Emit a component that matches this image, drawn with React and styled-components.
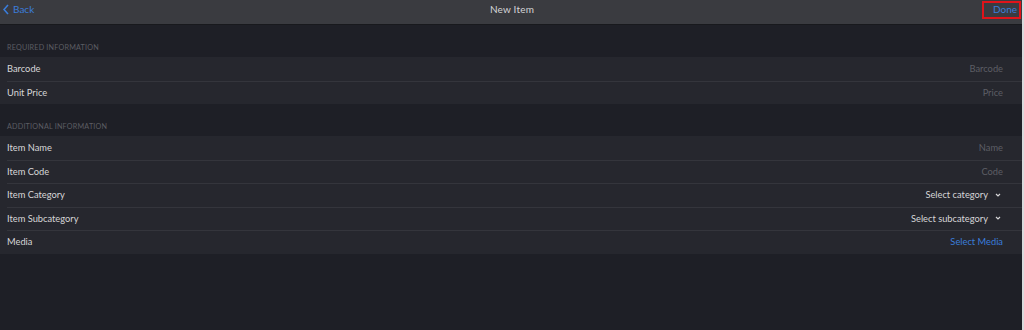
import React from 'react'
import styled, { createGlobalStyle } from 'styled-components'

const GlobalStyle = createGlobalStyle`
  html, body { margin: 0; padding: 0; background: #1e1f26; }
  body { font-family: Lato, 'Open Sans', sans-serif; }
`

const Screen = styled.div`
  width: 1022px;
  height: 330px;
  background: #1e1f26;
  border-right: 2px solid #d9dadc;
  display: flex;
  flex-direction: column;
`

const NavBar = styled.div`
  height: 25px;
  background: #3a3b40;
  border-bottom: 1px solid #18191d;
  display: grid;
  grid-template-columns: 1fr auto 1fr;
  align-items: start;
  box-sizing: border-box;
  padding: 1px 1px 0 3px;
`

const BackButton = styled.div`
  display: flex;
  align-items: center;
  gap: 4px;
  color: #3a7ddb;
  font-size: 10px;
  margin-top: 2px;
`

const Title = styled.div`
  color: #d4d4d6;
  font-size: 10px;
  letter-spacing: 0.2px;
  margin-top: 2px;
`

const DoneButton = styled.div`
  justify-self: end;
  color: #3a7ddb;
  font-size: 10px;
  border: 2px solid #e0141a;
  padding: 0 2px 0 9px;
  height: 18px;
  line-height: 13px;
  box-sizing: border-box;
`

const SectionTitle = styled.div`
  height: 32px;
  box-sizing: border-box;
  padding: 18px 0 0 7px;
  color: #5c5d63;
  font-size: 7.2px;
  text-transform: uppercase;
  letter-spacing: 0.2px;
`

const Group = styled.div`
  background: #26272e;
`

const Row = styled.div`
  height: 23.5px;
  display: flex;
  align-items: center;
  justify-content: space-between;
  padding: 0 19px 0 7px;
  position: relative;
  font-size: 9.3px;
  & + &::before {
    content: '';
    position: absolute;
    top: 0;
    left: 7px;
    right: 0;
    height: 1px;
    background: #34353c;
  }
`

const Label = styled.span`
  color: #d6d6d8;
`

const Value = styled.span`
  color: ${({ tone }) =>
    tone === 'link' ? '#3a7ddb' : tone === 'select' ? '#d6d6d8' : '#5d5e65'};
  display: flex;
  align-items: center;
  gap: 7px;
  margin-right: ${({ tone }) => (tone === 'select' ? '2px' : '0')};
`

const Chevron = () => (
  <svg width="6" height="4" viewBox="0 0 6 4">
    <path d="M1 1l2 2 2-2" fill="none" stroke="#d6d6d8" strokeWidth="1.2" />
  </svg>
)

const required = [
  { label: 'Barcode', value: 'Barcode' },
  { label: 'Unit Price', value: 'Price' },
]

const additional = [
  { label: 'Item Name', value: 'Name' },
  { label: 'Item Code', value: 'Code' },
  { label: 'Item Category', value: 'Select category', tone: 'select' },
  { label: 'Item Subcategory', value: 'Select subcategory', tone: 'select' },
  { label: 'Media', value: 'Select Media', tone: 'link' },
]

const Section = ({ title, rows }) => (
  <>
    <SectionTitle>{title}</SectionTitle>
    <Group>
      {rows.map((r) => (
        <Row key={r.label}>
          <Label>{r.label}</Label>
          <Value tone={r.tone}>
            {r.value}
            {r.tone === 'select' && <Chevron />}
          </Value>
        </Row>
      ))}
    </Group>
  </>
)

const App = () => (
  <Screen>
    <GlobalStyle />
    <NavBar>
      <BackButton>
        <svg width="6" height="11" viewBox="0 0 6 11">
          <path d="M5 1L1 5.5 5 10" fill="none" stroke="#3a7ddb" strokeWidth="1.6" />
        </svg>
        Back
      </BackButton>
      <Title>New Item</Title>
      <DoneButton>Done</DoneButton>
    </NavBar>
    <Section title="Required Information" rows={required} />
    <Section title="Additional Information" rows={additional} />
  </Screen>
)

export default App
